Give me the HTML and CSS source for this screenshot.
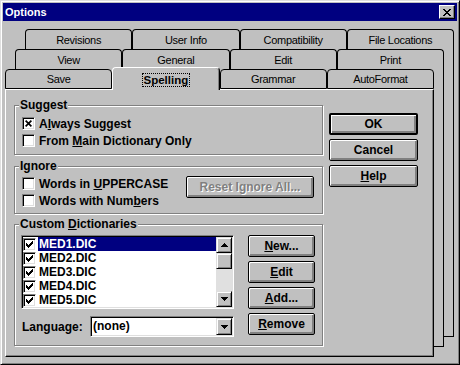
FILE: index.html
```
<!DOCTYPE html>
<html lang="en">
<head>
<meta charset="utf-8">
<title>Options</title>
<link rel="stylesheet" href="styles.css">
</head>
<body>
<div class="window">
  <div class="titlebar">
    <span class="title">Options</span>
    <span class="close"><svg width="8" height="7" viewBox="0 0 8 7" shape-rendering="crispEdges"><path d="M0 0h2v1H0zM6 0h2v1H6zM1 1h2v1H1zM5 1h2v1H5zM2 2h4v1H2zM3 3h2v1H3zM2 4h4v1H2zM1 5h2v1H1zM5 5h2v1H5zM0 6h2v1H0zM6 6h2v1H6z" fill="#000"/></svg></span>
  </div>
  <div class="body">
    <div class="stack">
      <div class="layer l1">
        <div class="tabrow">
          <div class="tab">Revisions</div>
          <div class="tab">User Info</div>
          <div class="tab">Compatibility</div>
          <div class="tab">File Locations</div>
        </div>
        <div class="page"></div>
      </div>
      <div class="layer l2">
        <div class="tabrow">
          <div class="tab">View</div>
          <div class="tab">General</div>
          <div class="tab">Edit</div>
          <div class="tab">Print</div>
        </div>
        <div class="page"></div>
      </div>
      <div class="layer l3">
        <div class="tabrow">
          <div class="tab">Save</div>
          <div class="tab sel"><span class="focus">Spelling</span></div>
          <div class="tab">Grammar</div>
          <div class="tab">AutoFormat</div>
        </div>
        <div class="page front">
          <div class="leftcol">
            <fieldset class="group g-suggest">
              <legend>Suggest</legend>
              <div class="cbrow">
                <span class="cb"><svg width="7" height="7" viewBox="0 0 7 7"><path d="M0.6 0.6L6.4 6.4M6.4 0.6L0.6 6.4" stroke="#000" stroke-width="1.7" fill="none"/></svg></span>
                <span>A<u>l</u>ways Suggest</span>
              </div>
              <div class="cbrow">
                <span class="cb"></span>
                <span>From <u>M</u>ain Dictionary Only</span>
              </div>
            </fieldset>
            <fieldset class="group g-ignore">
              <legend>Ignore</legend>
              <div class="ignore-body">
                <div class="cbcol">
                  <div class="cbrow">
                    <span class="cb"></span>
                    <span>Words in <u>U</u>PPERCASE</span>
                  </div>
                  <div class="cbrow">
                    <span class="cb"></span>
                    <span>Words with Num<u>b</u>ers</span>
                  </div>
                </div>
                <div class="btn disabled reset">Reset Ignore All...</div>
              </div>
            </fieldset>
            <fieldset class="group g-custom">
              <legend>Custom <u>D</u>ictionaries</legend>
              <div class="custom-body">
                <div class="dictcol">
                  <div class="listbox">
                    <div class="items">
                      <div class="item"><span class="cb lcb"><svg width="7" height="7" viewBox="0 0 7 7" shape-rendering="crispEdges"><path d="M6 0h1v1H6zM5 1h2v1H5zM0 2h1v1H0zM4 2h3v1H4zM0 3h2v1H0zM3 3h3v1H3zM0 4h5v1H0zM1 5h3v1H1zM2 6h1v1H2z" fill="#000"/></svg></span><span class="name selected">MED1.DIC</span></div>
                      <div class="item"><span class="cb lcb"><svg width="7" height="7" viewBox="0 0 7 7" shape-rendering="crispEdges"><path d="M6 0h1v1H6zM5 1h2v1H5zM0 2h1v1H0zM4 2h3v1H4zM0 3h2v1H0zM3 3h3v1H3zM0 4h5v1H0zM1 5h3v1H1zM2 6h1v1H2z" fill="#000"/></svg></span><span class="name">MED2.DIC</span></div>
                      <div class="item"><span class="cb lcb"><svg width="7" height="7" viewBox="0 0 7 7" shape-rendering="crispEdges"><path d="M6 0h1v1H6zM5 1h2v1H5zM0 2h1v1H0zM4 2h3v1H4zM0 3h2v1H0zM3 3h3v1H3zM0 4h5v1H0zM1 5h3v1H1zM2 6h1v1H2z" fill="#000"/></svg></span><span class="name">MED3.DIC</span></div>
                      <div class="item"><span class="cb lcb"><svg width="7" height="7" viewBox="0 0 7 7" shape-rendering="crispEdges"><path d="M6 0h1v1H6zM5 1h2v1H5zM0 2h1v1H0zM4 2h3v1H4zM0 3h2v1H0zM3 3h3v1H3zM0 4h5v1H0zM1 5h3v1H1zM2 6h1v1H2z" fill="#000"/></svg></span><span class="name">MED4.DIC</span></div>
                      <div class="item"><span class="cb lcb"><svg width="7" height="7" viewBox="0 0 7 7" shape-rendering="crispEdges"><path d="M6 0h1v1H6zM5 1h2v1H5zM0 2h1v1H0zM4 2h3v1H4zM0 3h2v1H0zM3 3h3v1H3zM0 4h5v1H0zM1 5h3v1H1zM2 6h1v1H2z" fill="#000"/></svg></span><span class="name">MED5.DIC</span></div>
                    </div>
                    <div class="vscroll">
                      <div class="sbtn"><svg width="7" height="4" viewBox="0 0 7 4" shape-rendering="crispEdges"><path d="M3 0h1v1h1v1h1v1h1v1H0V3h1V2h1V1h1z" fill="#000"/></svg></div>
                      <div class="thumb"></div>
                      <div class="track"></div>
                      <div class="sbtn"><svg width="7" height="4" viewBox="0 0 7 4" shape-rendering="crispEdges"><path d="M0 0h7v1H6v1H5v1H4v1H3V3H2V2H1V1H0z" fill="#000"/></svg></div>
                    </div>
                  </div>
                  <div class="langrow">
                    <span class="langlabel">Language:</span>
                    <div class="combo">
                      <span class="combo-text">(none)</span>
                      <span class="dd"><svg width="7" height="4" viewBox="0 0 7 4" shape-rendering="crispEdges"><path d="M0 0h7v1H6v1H5v1H4v1H3V3H2V2H1V1H0z" fill="#000"/></svg></span>
                    </div>
                  </div>
                </div>
                <div class="dictbtns">
                  <div class="btn"><span><u>N</u>ew...</span></div>
                  <div class="btn"><span><u>E</u>dit</span></div>
                  <div class="btn"><span><u>A</u>dd...</span></div>
                  <div class="btn"><span><u>R</u>emove</span></div>
                </div>
              </div>
            </fieldset>
          </div>
          <div class="rightcol">
            <div class="btn default">OK</div>
            <div class="btn">Cancel</div>
            <div class="btn"><span><u>H</u>elp</span></div>
          </div>
        </div>
      </div>
    </div>
  </div>
</div>
</body>
</html>
```

FILE: styles.css
```
* { box-sizing: border-box; }
html, body { margin: 0; padding: 0; }
body {
  width: 460px;
  height: 365px;
  overflow: hidden;
  background: #c0c0c0;
  font-family: "Liberation Sans", Arial, sans-serif;
  font-size: 12px;
  font-weight: bold;
  color: #000;
}
u { text-decoration: underline; text-underline-offset: 1px; text-decoration-thickness: 1px; }

.window {
  width: 460px;
  height: 365px;
  background: #c0c0c0;
  border: 1px solid;
  border-color: #dfdfdf #000 #000 #dfdfdf;
  box-shadow: inset 1px 1px #fff, inset -1px -1px #808080;
  padding: 2px;
}
.titlebar {
  height: 18px;
  background: #000080;
  display: flex;
  align-items: center;
  justify-content: space-between;
  padding: 0 2px 0 2px;
}
.title { color: #fff; font-size: 11px; font-weight: bold; line-height: 18px; }
.close {
  width: 16px;
  height: 14px;
  background: #c0c0c0;
  border: 1px solid;
  border-color: #fff #000 #000 #fff;
  box-shadow: inset -1px -1px #808080;
  display: flex;
  align-items: center;
  justify-content: center;
}
.body { padding: 8px 0 0 2px; }
.stack { display: grid; }
.layer {
  grid-area: 1 / 1;
  width: 429px;
  display: flex;
  flex-direction: column;
  align-self: start;
  justify-self: start;
}
.l1 { margin-left: 20px; height: 308px; }
.l2 { margin-left: 10px; margin-top: 20px; height: 298px; }
.l3 { margin-top: 40px; height: 288px; }

.tabrow { display: flex; height: 20px; flex: none; }
.tab {
  flex: 1 1 0;
  min-width: 0;
  background: #c0c0c0;
  border: 1px solid #000;
  border-bottom: 0;
  border-radius: 4px 4px 0 0;
  display: flex;
  align-items: center;
  justify-content: center;
  font-size: 11px;
  font-weight: normal;
  letter-spacing: -0.3px;
  white-space: nowrap;
}
.l3 .tab { border-bottom: 1px solid #000; }
.l3 .tab.sel {
  border-color: #fff #000 transparent #fff;
  border-bottom: 0;
  margin-top: -2px;
  margin-bottom: -1px;
  padding-top: 2px;
  z-index: 1;
  box-shadow: inset -1px 0 #808080;
  font-weight: bold;
  font-size: 11.5px;
  letter-spacing: 0;
}
.focus { border: 1px dotted #000; padding: 0 1px; line-height: 12px; }

.page {
  flex: 1;
  background: #c0c0c0;
  border-right: 1px solid #000;
  border-bottom: 1px solid #000;
}
.front {
  border-top: 1px solid #fff;
  border-left: 1px solid #fff;
  box-shadow: inset -1px -1px #808080;
  display: flex;
  padding: 8px 0 0 8px;
}
.leftcol { width: 309px; display: flex; flex-direction: column; }
.rightcol {
  width: 89px;
  margin-left: 6px;
  padding-top: 15px;
  display: flex;
  flex-direction: column;
  gap: 4px;
}

.group {
  margin: 0;
  min-inline-size: 0;
  width: 309px;
  border: 1px solid #808080;
  box-shadow: 1px 1px #fff, inset 1px 1px #fff;
  padding: 3px 7px 5px 7px;
}
.group legend {
  padding: 0 1px;
  margin-left: -3px;
  line-height: 14px;
  background: #c0c0c0;
}
.g-ignore { margin-top: 4px; padding: 2px 8px 4px 7px; }
.g-custom { margin-top: 3px; padding: 4px 7px 8px 7px; }

.cbrow { display: flex; align-items: center; height: 17px; gap: 4px; white-space: nowrap; }
.cb {
  flex: none;
  width: 13px;
  height: 13px;
  background: #fff;
  border: 1px solid;
  border-color: #808080 #fff #fff #808080;
  box-shadow: inset 1px 1px #000, inset -1px -1px #dfdfdf;
  display: flex;
  align-items: center;
  justify-content: center;
}
.ignore-body { display: flex; justify-content: space-between; align-items: flex-start; }
.reset { width: 128px; margin-top: 1px; }

.btn {
  height: 22px;
  background: #c0c0c0;
  border: 1px solid #000;
  border-radius: 2px;
  box-shadow: inset 1px 1px #fff, inset -1px -1px #808080, inset -2px -2px #808080;
  display: flex;
  align-items: center;
  justify-content: center;
  white-space: nowrap;
  padding-bottom: 1px;
}
.btn.default { border-width: 2px; }
.btn.disabled { color: #808080; text-shadow: 1px 1px #fff; }

.custom-body { display: flex; justify-content: space-between; }
.dictcol { width: 212px; display: flex; flex-direction: column; }
.listbox {
  width: 213px;
  height: 74px;
  margin-left: -1px;
  background: #fff;
  border: 1px solid;
  border-color: #808080 #fff #fff #808080;
  box-shadow: inset 1px 1px #000, inset -1px -1px #dfdfdf;
  padding: 1px;
  display: flex;
}
.items { flex: 1; display: flex; flex-direction: column; }
.item { height: 14px; display: flex; align-items: center; }
.lcb { margin-right: 2px; }
.name { flex: 1; height: 14px; line-height: 14px; padding-left: 1px; }
.name.selected { background: #000080; color: #fff; }
.vscroll { width: 16px; display: flex; flex-direction: column; }
.sbtn, .thumb, .dd {
  width: 16px;
  height: 16px;
  flex: none;
  background: #c0c0c0;
  border: 1px solid;
  border-color: #dfdfdf #000 #000 #dfdfdf;
  box-shadow: inset 1px 1px #fff, inset -1px -1px #808080;
  display: flex;
  align-items: center;
  justify-content: center;
}
.track { flex: 1; background: #e0e0e0; }

.langrow {
  margin-top: 7px;
  height: 21px;
  display: flex;
  align-items: center;
  justify-content: space-between;
}
.combo {
  width: 144px;
  height: 21px;
  background: #fff;
  border: 1px solid;
  border-color: #808080 #fff #fff #808080;
  box-shadow: inset 1px 1px #000, inset -1px -1px #dfdfdf;
  padding: 1px;
  display: flex;
}
.combo-text { flex: 1; line-height: 17px; padding-left: 1px; }
.dd { height: 17px; }

.dictbtns { width: 67px; display: flex; flex-direction: column; gap: 4px; }
```
